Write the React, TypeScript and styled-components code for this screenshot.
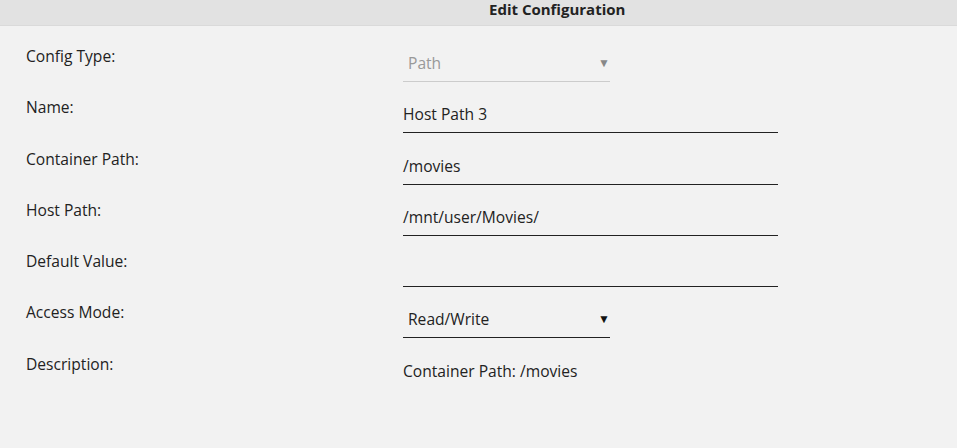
import React from "react";
import styled, { createGlobalStyle } from "styled-components";

const Global = createGlobalStyle`
  html, body { margin: 0; padding: 0; background: #f2f2f2; }
  body { font-family: "Open Sans", "Noto Sans", sans-serif; color: #222; }
`;

const Page = styled.div`
  width: 957px;
  height: 448px;
  background: #f2f2f2;
  overflow: hidden;
`;

const Header = styled.div`
  height: 25px;
  background: #e2e2e2;
  border-bottom: 1px solid #dadada;
  padding-left: 489px;
  font-weight: 700;
  font-size: 15px;
  line-height: 18px;
  color: #222;
  box-sizing: content-box;
`;

const Form = styled.div`
  padding: 20px 0 0 26px;
  display: flex;
  flex-direction: column;
`;

const Row = styled.div`
  display: grid;
  grid-template-columns: 377px auto;
  height: 51.3px;
  align-items: start;
`;

const Label = styled.div`
  font-size: 15.6px;
  line-height: 20px;
  color: #222;
`;

const TextField = styled.div`
  width: 375px;
  margin-top: 7px;
  height: 28px;
  font-size: 15.6px;
  line-height: 20px;
  border-bottom: 1px solid #222;
`;

const Select = styled.div<{ $disabled?: boolean }>`
  width: 202px;
  margin-top: 7px;
  height: 28px;
  padding-left: 5px;
  display: flex;
  justify-content: space-between;
  font-size: 15.6px;
  line-height: 20px;
  color: ${(p) => (p.$disabled ? "#999" : "#222")};
  border-bottom: 1px solid ${(p) => (p.$disabled ? "#ccc" : "#222")};
`;

const Arrow = styled.span<{ $disabled?: boolean }>`
  font-size: 12px;
  padding-right: 0;
  color: ${(p) => (p.$disabled ? "#888" : "#111")};
`;

const Note = styled.div`
  margin-top: 7px;
  font-size: 15.6px;
  line-height: 20px;
`;

export default function App() {
  return (
    <Page>
      <Global />
      <Header>Edit Configuration</Header>
      <Form>
        <Row>
          <Label>Config Type:</Label>
          <Select $disabled>
            <span>Path</span>
            <Arrow $disabled>▼</Arrow>
          </Select>
        </Row>
        <Row>
          <Label>Name:</Label>
          <TextField>Host Path 3</TextField>
        </Row>
        <Row>
          <Label>Container Path:</Label>
          <TextField>/movies</TextField>
        </Row>
        <Row>
          <Label>Host Path:</Label>
          <TextField>/mnt/user/Movies/</TextField>
        </Row>
        <Row>
          <Label>Default Value:</Label>
          <TextField />
        </Row>
        <Row>
          <Label>Access Mode:</Label>
          <Select>
            <span>Read/Write</span>
            <Arrow>▼</Arrow>
          </Select>
        </Row>
        <Row>
          <Label>Description:</Label>
          <Note>Container Path: /movies</Note>
        </Row>
      </Form>
    </Page>
  );
}
